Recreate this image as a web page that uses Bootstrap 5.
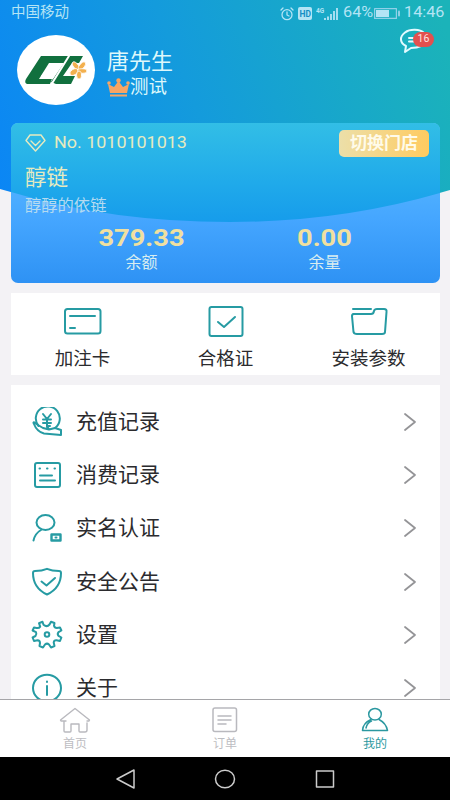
<!DOCTYPE html>
<html lang="zh-CN">
<head>
<meta charset="utf-8">
<meta name="viewport" content="width=device-width, initial-scale=1">
<title>我的</title>
<link href="https://cdn.jsdelivr.net/npm/bootstrap@5.3.0/dist/css/bootstrap.min.css" rel="stylesheet">
<style>
body{font-family:Roboto,"Noto Sans CJK SC",sans-serif;background:#f3f2f5;width:450px;height:800px;overflow:hidden;line-height:1;color:#2b2b2e}
svg{display:block;flex:none;fill:none;stroke-linecap:round;stroke-linejoin:round}
.screen{height:699px}
.hero-bg{left:0;top:0}
.status{height:27px;padding:0 10px 0 11px;color:#b4e4f5;font-size:14.5px}
.wide{display:inline-block;transform:scaleX(1.12);transform-origin:0 50%}
.profile{height:96px;padding-left:17px}
.avatar{width:78px;height:70px;margin-top:8px;border-radius:50%;background:#fff}
.who{margin:22px 0 0 12px;color:#def8fb}
.user-name{font-size:22px;line-height:26px}
.user-tag{font-size:18.5px;line-height:25px}
.msg{right:14px;top:28px}
.msg-count{left:16px;top:4px;width:21px;height:15px;border-radius:7.5px;background:#e2504f;color:#fde4e4;font-size:10.5px}
.member{height:160px;margin:0 10px 0 11px;border-radius:7px;overflow:hidden;color:#e6eac0}
.member-bg{left:0;top:0}
.member-no{padding:7px 11px 0 14px;height:35px;font-size:16px}
.switch-btn{width:90px;height:27px;border:0;border-radius:5px;background:linear-gradient(90deg,#ecdfa9,#ffcb60);color:#fffbea;font-size:17px;font-weight:700}
.shop{font-size:21.5px;line-height:28px;padding:6px 0 0 14px}
.shop-sub{font-size:16.3px;line-height:24px;padding:2px 0 0 14px;color:#b5daf0}
.amounts{padding:6px 23px 0 39px}
.amount{width:183px}
.amount-num{font-size:23.5px;line-height:29px;font-weight:700;transform:scaleX(1.16);color:#f0e0a0}
.amount-label{font-size:16px;line-height:20px;color:#d8edf0}
.panel{background:#fff;margin:10px 10px 0 11px}
.quick{height:82px}
.quick-item{width:143px;font-size:18.5px;padding-top:9px}
.quick-item span{line-height:26px;margin-top:6px}
.line-icon{stroke:#269ba3;stroke-width:2}
.menu{height:320px;padding-top:10px}
.menu-row{height:53.3px;padding:0 23px 0 20px;font-size:21px}
.menu-row .label{margin-left:13px;line-height:30px}
.tabs{height:58px;background:#fff;border-top:1px solid #a5a5a8;color:#bdbdc2;font-size:12px}
.tab-item{width:150px;padding-top:7px}
.tab-item span{line-height:17px;margin-top:3px}
.tab-item.current{color:#2b98a0}
.sysnav{height:43px;background:#000;gap:78px}
</style>
</head>
<body>
<main class="screen position-relative overflow-hidden">
<svg class="hero-bg position-absolute" width="450" height="225">
<defs><linearGradient id="sea" gradientUnits="userSpaceOnUse" x1="0" y1="190" x2="440" y2="15"><stop stop-color="#0b86f5"/><stop offset=".45" stop-color="#149bdc"/><stop offset="1" stop-color="#1bb3b9"/></linearGradient></defs>
<path d="M0 0H450V190Q345 222 230 222Q110 222 0 189Z" fill="url(#sea)"/></svg>
<div class="position-relative">
<header class="status d-flex align-items-center justify-content-between">
<span>中国移动</span>
<div class="d-flex align-items-center">
<svg width="14" height="14" viewBox="0 0 14 14" stroke="#b4e4f5" stroke-width="1.3"><circle cx="7" cy="7.7" r="5"/><path d="M7 5v3l2 1M1 3l2-2M13 3l-2-2"/></svg>
<svg class="ms-1" width="14" height="13"><rect width="14" height="13" rx="2" fill="#b4e4f5"/><text x="1.4" y="9.6" font-size="8.5" font-weight="700" fill="#168fc4">HD</text></svg>
<svg class="ms-1" width="23" height="14" viewBox="0 0 23 14"><text x="0" y="6" font-size="6.5" font-weight="700" fill="#b4e4f5">4G</text><path d="M9 13v-2M12 13V9.500M15 13V7M18 13V4M21 13V1" stroke="#b4e4f5" stroke-width="1.8" stroke-linecap="butt"/></svg>
<span class="wide ms-1" style="width:31px">64%</span>
<svg width="26" height="11" viewBox="0 0 26 11"><rect x=".6" y=".6" width="21.800" height="9.800" stroke="#8fd0e8" stroke-width="1.2"/><rect x="2" y="2" width="13" height="7" fill="#b4e4f5"/><path d="M25 3.500v4" stroke="#8fd0e8" stroke-width="2"/></svg>
<span class="wide ms-1" style="width:36px">14:46</span>
</div>
</header>
<section class="profile d-flex">
<div class="avatar d-flex align-items-center justify-content-center">
<svg width="64" height="34" viewBox="0 0 64 34"><path d="M17 3H59L55 10H48L39 23H51L47 31H32L27 29L38 10H27L17 23H29L26 31H3Q0 30 2 26Z" fill="#11703e"/><path d="M25 10H40L29 26H15Z" fill="#fff"/><path d="M39 3L46 4L43 8H37Z" fill="#11703e"/><path d="M45 3L27 32" stroke="#fff" stroke-width="2"/><g fill="#f3b04e" stroke="#fff" stroke-width=".8"><ellipse cx="52" cy="13" rx="2.500" ry="5" transform="rotate(-38 52 13)"/><ellipse cx="58" cy="13" rx="2.500" ry="5" transform="rotate(38 58 13)"/><ellipse cx="58" cy="18" rx="5" ry="2.300"/><ellipse cx="50" cy="19" rx="4.500" ry="2.800" transform="rotate(-30 50 19)"/><ellipse cx="55" cy="22" rx="2.500" ry="4"/></g></svg>
</div>
<div class="who">
<div class="user-name">唐先生</div>
<div class="user-tag d-flex align-items-center"><svg width="23" height="19" viewBox="0 0 23 19" fill="#f7a564"><path d="M3 15L1 6L7 9L11.500 3L16 9L22 6L20 15ZM3 16.500H20V18.500H3Z" fill="#f7a564"/><g fill="#f7a564"><circle cx="2" cy="5" r="1.800"/><circle cx="11.500" cy="2.500" r="2.200"/><circle cx="21" cy="5" r="1.800"/></g></svg><span>测试</span></div>
</div>
<div class="msg position-absolute">
<svg width="39" height="27" viewBox="0 0 39 27" stroke="#e2faff" stroke-width="2"><path d="M27 5C23 1 13 .8 8 4.500C2 9 3 15 9 18L8 24L14 20Q20 20 24 18"/><path d="M12 10H18M12 13.500H18"/></svg>
<span class="msg-count position-absolute d-flex align-items-center justify-content-center">16</span>
</div>
</section>
<section class="member position-relative">
<svg class="member-bg position-absolute" width="429" height="160">
<defs><linearGradient id="lower" x1="0" y1="0" x2="0" y2="1"><stop stop-color="#64c4ff"/><stop offset=".6" stop-color="#45a6ff"/><stop offset="1" stop-color="#2e92f4"/></linearGradient><linearGradient id="upper" x1="0" y1="0" x2="0" y2="1"><stop stop-color="#32bee6"/><stop offset=".6" stop-color="#20aaea"/><stop offset="1" stop-color="#169ceb"/></linearGradient></defs>
<path d="M0 0H429V160H0Z" fill="url(#lower)"/><path d="M0 0H429V70Q329 99 219 99Q99 99 0 69Z" fill="url(#upper)"/></svg>
<div class="position-relative">
<div class="member-no d-flex justify-content-between align-items-start">
<div class="d-flex align-items-center pt-1"><svg width="21" height="18" viewBox="0 0 21 18" stroke="#e6eac0" stroke-width="1.400"><path d="M5 1H16L20 6.500L10.500 17L1 6.500ZM6 7L10.500 11.500L15 7"/></svg><span class="wide" style="margin-left:8px">No. 1010101013</span></div>
<button class="switch-btn p-0 d-flex align-items-center justify-content-center" type="button">切换门店</button>
</div>
<div class="shop">醇链</div>
<div class="shop-sub">醇醇的依链</div>
<div class="amounts d-flex">
<div class="amount text-center"><div class="amount-num">379.33</div><div class="amount-label">余额</div></div>
<div class="amount text-center"><div class="amount-num">0.00</div><div class="amount-label">余量</div></div>
</div>
</div>
</section>
<section class="panel quick d-flex">
<div class="quick-item d-flex flex-column align-items-center"><svg class="line-icon" width="40" height="38" viewBox="0 0 40 38"><rect x="2" y="7" width="35.500" height="24.500" rx="2.500"/><path d="M7 14H32M7 26H12"/></svg><span>加注卡</span></div>
<div class="quick-item d-flex flex-column align-items-center"><svg class="line-icon" width="40" height="38" viewBox="0 0 40 38"><rect x="3.500" y="5" width="33" height="29" rx="2"/><path d="M12 20L18 25L29 15"/></svg><span>合格证</span></div>
<div class="quick-item d-flex flex-column align-items-center"><svg class="line-icon" width="40" height="38" viewBox="0 0 40 38"><path d="M4 7H22M4 12H22Q24.500 12 25 9Q25.500 7 28 7H35Q38 7 37.500 10L36 30Q36 32 33 32H8Q5 32 4.500 30L3 14Q3 12 5 12"/></svg><span>安装参数</span></div>
</section>
<section class="panel menu">
<div class="menu-row d-flex align-items-center"><svg class="line-icon" width="32" height="30" viewBox="0 0 32 30"><path d="M7.500 19A12 12 0 1 1 24 21"/><path d="M12 7L16 12L20 7M16 12V20M12 12.500H20M12 16H20"/><path d="M2.500 16Q6 25 13 26.500L30 28V23L24 21L18 22.500L16 19L19 19M2.500 16Q2 14 7 18L12 21L18 22.500"/></svg><span class="label">充值记录</span><svg class="ms-auto" width="14" height="20" viewBox="0 0 14 20" stroke="#949497" stroke-width="1.800"><path d="M2 2L12 10L2 18"/></svg></div>
<div class="menu-row d-flex align-items-center"><svg class="line-icon" width="32" height="30" viewBox="0 0 32 30"><rect x="4" y="3" width="25" height="24" rx="2"/><path d="M8.500 8.500H9M16 8.500H16.500M23.500 8.500H24M9 15.500H21M9 20.500H24"/></svg><span class="label">消费记录</span><svg class="ms-auto" width="14" height="20" viewBox="0 0 14 20" stroke="#949497" stroke-width="1.800"><path d="M2 2L12 10L2 18"/></svg></div>
<div class="menu-row d-flex align-items-center"><svg class="line-icon" width="32" height="30" viewBox="0 0 32 30"><ellipse cx="14.500" cy="9.500" rx="9" ry="7.500"/><path d="M2.500 27.500Q4 20.500 10 17"/><rect x="20.500" y="21.500" width="9" height="6" stroke-width="2.400"/><path d="M24.500 24.500H25.500"/></svg><span class="label">实名认证</span><svg class="ms-auto" width="14" height="20" viewBox="0 0 14 20" stroke="#949497" stroke-width="1.800"><path d="M2 2L12 10L2 18"/></svg></div>
<div class="menu-row d-flex align-items-center"><svg class="line-icon" width="32" height="30" viewBox="0 0 32 30"><path d="M16 1.800Q21 4 28 4Q30 4 30 6Q30 21 16 27.500Q2 21 2 6Q2 4 4 4Q11 4 16 1.800ZM10.500 14.500L15.500 18.500L24 11"/></svg><span class="label">安全公告</span><svg class="ms-auto" width="14" height="20" viewBox="0 0 14 20" stroke="#949497" stroke-width="1.800"><path d="M2 2L12 10L2 18"/></svg></div>
<div class="menu-row d-flex align-items-center"><svg class="line-icon" width="32" height="30" viewBox="0 0 32 30"><path d="M12.500 4.800L11.500 1.800L8 3.200L9.200 6.600Q8 8.500 5.500 8L3 7.500L1.600 10.500L5 12.200Q6 14.500 4.500 16L1.600 17.500L3 21L6.500 20.300Q9 20.500 9 23L8.500 26L12 27.500L14 24.500Q16 22.800 18 24.500L20 27.500L23.500 26L22.700 22.500Q23 20 25.500 20.200L29 21L30.400 17.500L27.500 15.800Q26 14 27.500 12.200L30.400 10.500L29 7.500L25.800 8Q23.500 8 23 5.800L23.500 3L20 1.800L18.500 4.500Q16 7.500 12.500 4.800Z"/><circle cx="16" cy="14.500" r="2.300"/></svg><span class="label">设置</span><svg class="ms-auto" width="14" height="20" viewBox="0 0 14 20" stroke="#949497" stroke-width="1.800"><path d="M2 2L12 10L2 18"/></svg></div>
<div class="menu-row d-flex align-items-center"><svg class="line-icon" width="32" height="30" viewBox="0 0 32 30"><ellipse cx="16" cy="15" rx="14" ry="13.300"/><path d="M16 13V22M16 8.500V9"/></svg><span class="label">关于</span><svg class="ms-auto" width="14" height="20" viewBox="0 0 14 20" stroke="#949497" stroke-width="1.800"><path d="M2 2L12 10L2 18"/></svg></div>
</section>
</div>
</main>
<nav class="tabs d-flex">
<div class="tab-item d-flex flex-column align-items-center"><svg width="32" height="26" viewBox="0 0 32 26" stroke="#b9b9be" stroke-width="1.400"><path d="M7 14H2L1.500 13L16 1.500L30.500 13L30 14H28M5 14V24Q5 25 6 25H11Q12 25 12 24V17H20V24Q20 25 21 25H26Q28 25 28 23V16"/></svg><span>首页</span></div>
<div class="tab-item d-flex flex-column align-items-center"><svg width="26" height="26" viewBox="0 0 26 26" stroke="#b9b9be" stroke-width="1.500"><rect x="1" y="1" width="23.500" height="23.500" rx="2"/><path d="M6 9H19M6 13H19M6 17H14"/></svg><span>订单</span></div>
<div class="tab-item current d-flex flex-column align-items-center"><svg width="28" height="26" viewBox="0 0 28 26" stroke="#2b98a0" stroke-width="1.500"><ellipse cx="14" cy="7.200" rx="6.300" ry="5.800"/><path d="M10 12.500Q2 16 1.500 23.500H26.500Q25 16 18 12.500M5 21Q6 16 10.500 14"/></svg><span>我的</span></div>
</nav>
<footer class="sysnav d-flex align-items-center justify-content-center">
<svg width="22" height="22" viewBox="0 0 22 22" stroke="#ccc" stroke-width="1.500"><path d="M20 2V20L3 11Z"/></svg>
<svg width="22" height="22" viewBox="0 0 22 22" stroke="#ccc" stroke-width="1.500"><ellipse cx="11" cy="11" rx="9.500" ry="8.800"/></svg>
<svg width="22" height="22" viewBox="0 0 22 22" stroke="#ccc" stroke-width="1.500"><rect x="2.500" y="3" width="17" height="16"/></svg>
</footer>
<script src="https://cdn.jsdelivr.net/npm/bootstrap@5.3.0/dist/js/bootstrap.bundle.min.js"></script>
</body>
</html>
